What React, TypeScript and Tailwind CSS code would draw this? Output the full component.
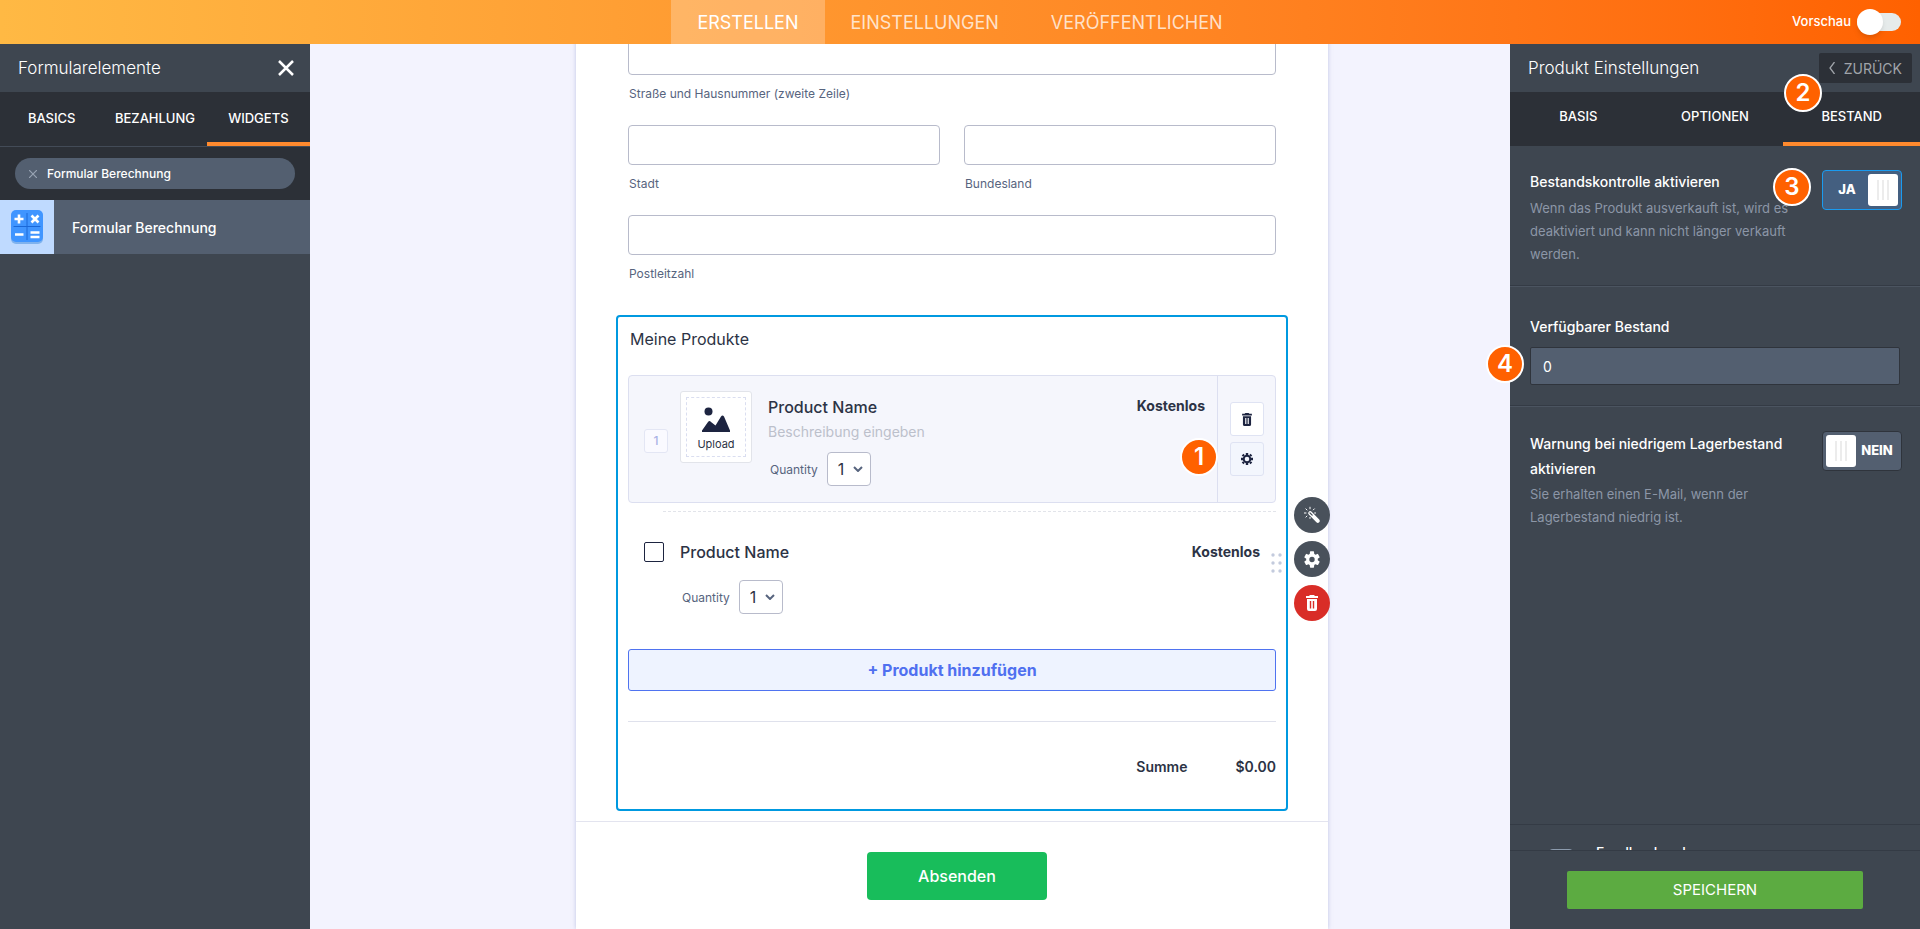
import { useState } from 'react'
import type { ReactNode } from 'react'

type ToggleProps = {
  id: string
  checked: boolean
  onChange: (value: boolean) => void
}

const mainTabs = ['ERSTELLEN', 'EINSTELLUNGEN', 'VERÖFFENTLICHEN']
const elementTabs = ['BASICS', 'BEZAHLUNG', 'WIDGETS']
const productTabs = ['BASIS', 'OPTIONEN', 'BESTAND']

function TrashIcon({ className }: { className?: string }) {
  return (
    <svg viewBox="0 0 12 16" className={className} fill="currentColor" aria-hidden="true">
      <path d="M4 0h4l1 1h3v2H0V1h3z" />
      <path
        fillRule="evenodd"
        d="M1 4h10v10a2 2 0 0 1-2 2H3a2 2 0 0 1-2-2zM3.8 6v7.5h1.4V6zM6.8 6v7.5h1.4V6z"
      />
    </svg>
  )
}

function GearIcon({ className }: { className?: string }) {
  return (
    <svg viewBox="0 0 22 24" className={className} fill="currentColor" aria-hidden="true">
      <path
        fillRule="evenodd"
        d="M19.14 12.94a7 7 0 0 0 0-1.88l2.5-1.9a.6.6 0 0 0 .1-.8l-2.3-4a.6.6 0 0 0-.74-.26l-2.9 1.2a7.4 7.4 0 0 0-1.6-.94L13.8.9a.6.6 0 0 0-.6-.5h-4.4a.6.6 0 0 0-.6.5l-.4 3.46a7.4 7.4 0 0 0-1.6.94l-2.9-1.2a.6.6 0 0 0-.74.26l-2.3 4a.6.6 0 0 0 .1.8l2.5 1.9a7 7 0 0 0 0 1.88l-2.5 1.9a.6.6 0 0 0-.1.8l2.3 4c.15.25.45.35.74.26l2.9-1.2c.5.4 1.03.7 1.6.94l.4 3.46c.05.3.3.5.6.5h4.4c.3 0 .55-.2.6-.5l.4-3.46a7.4 7.4 0 0 0 1.6-.94l2.9 1.2c.27.1.6 0 .74-.26l2.3-4a.6.6 0 0 0-.1-.8zM11 15.8a3.8 3.8 0 1 1 0-7.6 3.8 3.8 0 0 1 0 7.6z"
      />
    </svg>
  )
}

function CogIcon({ className }: { className?: string }) {
  return (
    <svg viewBox="0 0 12 12" className={className} aria-hidden="true">
      <circle cx="6" cy="6" r="3.3" fill="none" stroke="currentColor" strokeWidth="2" />
      <g stroke="currentColor" strokeWidth="2.4">
        <path d="M6 0v2M6 10v2M0 6h2M10 6h2M1.6 1.6L3 3M9 9l1.4 1.4M10.4 1.6L9 3M3 9l-1.4 1.4" />
      </g>
    </svg>
  )
}

function WandIcon() {
  return (
    <svg viewBox="0 0 18 18" className="size-[18px]" fill="none" stroke="white" aria-hidden="true">
      <path d="M7.2 7.2l7.6 7.6" strokeWidth="4" strokeLinecap="round" />
      <path d="M7 7l2.2 2.2" stroke="#49515b" strokeWidth="1.2" strokeLinecap="round" />
      <path
        d="M7 .8v2.4M1 7h2.4M2.6 2.6l1.7 1.7M11.6 2.6L10 4.2M2.6 11.4l1.6-1.6M7 11v1.8M11.2 7h1.8"
        strokeWidth="1"
      />
    </svg>
  )
}

function CalculatorIcon() {
  return (
    <svg viewBox="0 0 34 36" className="h-9 w-[34px]" aria-hidden="true">
      <rect x="1" y="2" width="32" height="33" rx="5" fill="#7fb2ee" />
      <rect x="1" y="1" width="32" height="32" rx="5" fill="#4095ff" />
      <path d="M17 4v27M3.5 17.5h27" stroke="#1a68d8" />
      <path
        d="M4.5 10h9M9 5.500v9M5 25.500h8.500M21.500 6.500l7 7M28.500 6.500l-7 7M20.500 23.500h9M20.500 28h9"
        stroke="white"
        strokeWidth="2.6"
      />
    </svg>
  )
}

function StepBadge({ step, className }: { step: number; className: string }) {
  return (
    <span
      className={`absolute z-20 flex size-[38px] items-center justify-center rounded-full border-2 border-white bg-[#ff6100] text-[24px] leading-none font-semibold text-white ${className}`}
    >
      {step}
    </span>
  )
}

function Toggle({ id, checked, onChange }: ToggleProps) {
  return (
    <label
      htmlFor={id}
      className={`flex h-10 w-20 shrink-0 cursor-pointer items-center rounded border p-[3px] text-[13px] font-extrabold text-white ${
        checked ? 'border-[#1a9bf0] bg-[#445f80]' : 'flex-row-reverse border-[#2f343c] bg-[#535f70]'
      }`}
    >
      <input
        id={id}
        type="checkbox"
        className="sr-only"
        checked={checked}
        onChange={e => onChange(e.target.checked)}
      />
      <span className="flex-1 text-center">{checked ? 'JA' : 'NEIN'}</span>
      <span className="flex h-8 w-[30px] items-center justify-center gap-[3px] rounded-[3px] bg-white">
        <span className="h-5 w-[2px] bg-[#ececec]" />
        <span className="h-5 w-[2px] bg-[#ececec]" />
        <span className="h-5 w-[2px] bg-[#ececec]" />
      </span>
    </label>
  )
}

function PanelTabs({ items, active, className }: { items: string[]; active: string; className: string }) {
  return (
    <nav className="grid h-[54px] shrink-0 grid-cols-3 bg-[#2c3037]">
      {items.map(item => (
        <button
          key={item}
          type="button"
          className={`border-b-4 text-[13px] font-medium text-white ${className} ${
            item === active ? 'border-[#ff8a2e]' : 'border-transparent'
          }`}
        >
          {item}
        </button>
      ))}
    </nav>
  )
}

function Field({ id, label }: { id: string; label: string }) {
  return (
    <div className="h-[90px]">
      <input id={id} type="text" className="block h-10 w-full rounded border border-[#b8bbcb] px-3" />
      <label htmlFor={id} className="mt-2.5 block pl-px text-[12px] leading-[18px] text-[#57647e]">
        {label}
      </label>
    </div>
  )
}

function Quantity({ id }: { id: string }) {
  return (
    <div className="flex items-center pl-0.5">
      <label htmlFor={id} className="pt-0.5 text-[12px] text-[#57647e]">
        Quantity
      </label>
      <div className="relative ml-[9px]">
        <select
          id={id}
          className="block h-[34px] w-11 appearance-none rounded border border-[#b8bbcb] bg-white pl-2.5 text-[16px] text-[#2c3345]"
        >
          <option>1</option>
          <option>2</option>
          <option>3</option>
        </select>
        <svg
          viewBox="0 0 10 6"
          className="pointer-events-none absolute top-3.5 right-2 h-1.5 w-2.5"
          fill="none"
          stroke="#57647e"
          strokeWidth="2"
          aria-hidden="true"
        >
          <path d="M1 1l4 4 4-4" />
        </svg>
      </div>
    </div>
  )
}

function RoundButton({ label, className, children }: { label: string; className: string; children: ReactNode }) {
  return (
    <button
      type="button"
      aria-label={label}
      className={`flex size-9 items-center justify-center rounded-full text-white ${className}`}
    >
      {children}
    </button>
  )
}

function Header() {
  const [preview, setPreview] = useState(false)

  return (
    <header className="grid h-11 shrink-0 grid-cols-[1fr_auto_1fr] bg-linear-to-r from-[#ffb944] to-[#ff6100]">
      <nav className="col-start-2 flex text-[18px]">
        {mainTabs.map(tab => (
          <button
            key={tab}
            type="button"
            className={`px-[26px] ${tab === 'ERSTELLEN' ? 'bg-white/25 text-white' : 'text-white/75'}`}
          >
            {tab}
          </button>
        ))}
      </nav>
      <label
        htmlFor="preview"
        className="flex items-center gap-1.5 justify-self-end pr-[19px] text-[13px] font-medium text-white"
      >
        Vorschau
        <input
          id="preview"
          type="checkbox"
          className="sr-only"
          checked={preview}
          onChange={e => setPreview(e.target.checked)}
        />
        <span className="flex h-[18px] w-11 items-center rounded-full bg-[#e6ebeb]">
          <span className="size-[26px] shrink-0 rounded-full bg-white shadow-md" />
        </span>
      </label>
    </header>
  )
}

function ElementsPanel() {
  const [search, setSearch] = useState('Formular Berechnung')

  return (
    <aside className="flex w-[310px] shrink-0 flex-col bg-[#3e4650] text-white">
      <div className="flex h-12 items-center justify-between pr-4 pl-[18px]">
        <h2 className="pt-0.5 text-[17px] font-light">Formularelemente</h2>
        <button type="button" aria-label="Schließen">
          <svg viewBox="0 0 16 16" className="size-4" stroke="white" strokeWidth="2.5" aria-hidden="true">
            <path d="M1 1l14 14M15 1L1 15" />
          </svg>
        </button>
      </div>
      <PanelTabs items={elementTabs} active="WIDGETS" className="pt-1" />
      <div className="border-t border-[#434b57] bg-[#2c3037] px-[15px] py-[11px]">
        <div className="flex h-[31px] items-center gap-2.5 rounded-full bg-[#535f70] px-3.5">
          <button type="button" aria-label="Suche löschen">
            <svg viewBox="0 0 8 8" className="size-2" stroke="#98a3b3" strokeWidth="1.2" aria-hidden="true">
              <path d="M0 0l8 8M8 0L0 8" />
            </svg>
          </button>
          <input
            type="text"
            aria-label="Suche"
            value={search}
            onChange={e => setSearch(e.target.value)}
            className="min-w-0 flex-1 text-[12px] font-medium outline-none"
          />
        </div>
      </div>
      <button type="button" className="flex h-[54px] items-center bg-[#535f70] text-left text-[14px] font-medium">
        <span className="flex size-[54px] items-center justify-center bg-[#bfdaff]">
          <CalculatorIcon />
        </span>
        <span className="pl-[18px]">Formular Berechnung</span>
      </button>
    </aside>
  )
}

function SelectedProduct() {
  return (
    <div className="relative flex h-32 rounded border border-[#dcdff0] bg-[#f5f6fc]">
      <div className="flex flex-1 items-start py-[15px] pr-3 pl-[15px]">
        <span className="mt-[38px] flex size-6 items-center justify-center rounded-[3px] border border-[#e3e6f4] bg-[#fafaff] text-[12px] font-medium text-[#a9b2e6]">
          1
        </span>
        <button type="button" className="ml-3 size-[72px] rounded-[3px] border border-[#e2e4ea] bg-white p-[5px]">
          <span className="flex size-full flex-col items-center justify-end border border-dashed border-[#dadef0] pb-[5px]">
            <svg viewBox="0 0 28 26" className="h-[26px] w-7" fill="#1d2440" aria-hidden="true">
              <circle cx="6.5" cy="4.5" r="4" />
              <path d="M0 25v-1.500L6 15q1.500-2 3 0l4.500 3.500L19 9.500q1.500-2 3 0L28 23.500V25z" />
            </svg>
            <span className="mt-1 text-[11px] leading-[14px] text-[#2c3345]">Upload</span>
          </span>
        </button>
        <div className="ml-4 flex-1">
          <h3 className="text-[16px] leading-8 font-medium text-[#2c3345]">Product Name</h3>
          <p className="text-[14px] leading-[18px] text-[#bcc0cb]">Beschreibung eingeben</p>
          <div className="pt-[11px]">
            <Quantity id="quantity-1" />
          </div>
        </div>
        <span className="text-[14px] leading-[30px] font-bold text-[#2c3345]">Kostenlos</span>
      </div>
      <div className="flex w-[58px] flex-col items-center justify-center gap-1.5 border-l border-[#dcdff0]">
        <button
          type="button"
          aria-label="Produkt löschen"
          className="flex size-[34px] items-center justify-center rounded-[3px] border border-[#dfe3f3] bg-white text-[#1d2440]"
        >
          <TrashIcon className="h-[13px] w-2.5" />
        </button>
        <button
          type="button"
          aria-label="Produkt Einstellungen"
          className="flex size-[34px] items-center justify-center rounded-[3px] border border-[#dfe3f3] bg-[#f3f6fd] text-[#1d2440]"
        >
          <CogIcon className="size-3" />
        </button>
      </div>
      <StepBadge step={1} className="top-[62px] right-[57px]" />
    </div>
  )
}

function ProductList() {
  return (
    <section className="relative mx-10 rounded border-2 border-[#0099e0] px-2.5 pb-4">
      <h2 className="pt-[9px] pb-[23px] pl-0.5 text-[16px] leading-[26px] text-[#2c3345]">Meine Produkte</h2>
      <SelectedProduct />
      <div className="mt-2 ml-[35px] border-t border-dashed border-[#e2e4ea]" />
      <div className="flex items-start pt-[30px] pr-4 pl-4">
        <input
          id="product-2"
          type="checkbox"
          className="size-5 appearance-none rounded-[2px] border border-[#1d2440] bg-white"
        />
        <div className="ml-4 flex-1">
          <label htmlFor="product-2" className="block text-[16px] leading-5 font-medium text-[#2c3345]">
            Product Name
          </label>
          <div className="pt-[18px]">
            <Quantity id="quantity-2" />
          </div>
        </div>
        <span className="text-[14px] leading-5 font-bold text-[#2c3345]">Kostenlos</span>
      </div>
      <button
        type="button"
        className="mt-[35px] block h-[42px] w-full rounded-[3px] border border-[#4f73f0] bg-[#eef3ff] text-[16px] font-bold text-[#5070f0]"
      >
        + Produkt hinzufügen
      </button>
      <dl className="mt-[30px] flex justify-end gap-12 border-t border-[#dfe1ec] pt-[33px] pb-[14px] text-[14px] leading-6 font-semibold text-[#2c3345]">
        <dt>Summe</dt>
        <dd>$0.00</dd>
      </dl>
      {/* drag handle */}
      <svg viewBox="0 0 12 22" className="absolute top-[235px] right-[3px] h-[22px] w-3" fill="#c3cbdd" aria-hidden="true">
        <circle cx="2" cy="3" r="1.7" />
        <circle cx="9" cy="3" r="1.7" />
        <circle cx="2" cy="11" r="1.7" />
        <circle cx="9" cy="11" r="1.7" />
        <circle cx="2" cy="19" r="1.7" />
        <circle cx="9" cy="19" r="1.7" />
      </svg>
      <div className="absolute top-[180px] -right-11 flex flex-col gap-2">
        <RoundButton label="Assistent" className="bg-[#49515b]">
          <WandIcon />
        </RoundButton>
        <RoundButton label="Einstellungen" className="bg-[#49515b]">
          <GearIcon className="h-[17px] w-4" />
        </RoundButton>
        <RoundButton label="Löschen" className="bg-[#d92d27]">
          <TrashIcon className="h-4 w-3" />
        </RoundButton>
      </div>
    </section>
  )
}

function FormCanvas() {
  return (
    <main className="flex min-w-0 flex-1 justify-center overflow-hidden bg-[#f3f3fe] pl-21">
      {/* the form is scrolled a little past its first field */}
      <form className="-mt-[9px] w-full max-w-[752px] bg-white shadow-[0_0_4px_rgba(140,150,200,0.5)]">
        <div className="px-13">
          <Field id="street2" label="Straße und Hausnummer (zweite Zeile)" />
          <div className="grid grid-cols-2 gap-6">
            <Field id="city" label="Stadt" />
            <Field id="state" label="Bundesland" />
          </div>
          <Field id="zip" label="Postleitzahl" />
        </div>
        <div className="pt-2.5">
          <ProductList />
        </div>
        <div className="mt-2.5 flex justify-center border-t border-[#e3e4ef] pt-[30px] pb-8 pl-2.5">
          <button type="submit" className="h-12 w-[180px] rounded bg-[#18bd5b] text-[16px] font-medium text-white">
            Absenden
          </button>
        </div>
      </form>
    </main>
  )
}

function ProductPanel() {
  const [stockControl, setStockControl] = useState(true)
  const [lowStock, setLowStock] = useState(false)
  const [stock, setStock] = useState('0')

  return (
    <aside className="relative flex w-[410px] shrink-0 flex-col bg-[#3e4650] text-white">
      <div className="flex h-12 shrink-0 items-center justify-between pr-2 pl-[18px]">
        <h2 className="pt-0.5 text-[17px] font-light">Produkt Einstellungen</h2>
        <button
          type="button"
          className="flex h-[30px] items-center gap-[9px] rounded-[2px] bg-[#2c3037] px-2.5 text-[14px] text-[#a0a4aa]"
        >
          <svg viewBox="0 0 6 12" className="h-3 w-1.5" fill="none" stroke="currentColor" aria-hidden="true">
            <path d="M5.500 0L1 6l4.500 6" strokeWidth="1.3" />
          </svg>
          ZURÜCK
        </button>
      </div>
      <PanelTabs items={productTabs} active="BESTAND" className="" />
      <div className="flex min-h-0 flex-1 flex-col overflow-hidden">
        <div className="flex items-start justify-between border-b border-[#343b45] pt-6 pr-[18px] pb-[19px] pl-5">
          <div className="w-[272px]">
            <label htmlFor="stock-control" className="block text-[14px] leading-[24px] font-medium">
              Bestandskontrolle aktivieren
            </label>
            <p className="mt-[3px] text-[13px] leading-[23px] text-[#8c96a7]">
              Wenn das Produkt ausverkauft ist, wird es deaktiviert und kann nicht länger verkauft werden.
            </p>
          </div>
          <Toggle id="stock-control" checked={stockControl} onChange={setStockControl} />
        </div>
        <div className="border-t border-b border-t-[#4b5460] border-b-[#343b45] pt-7 pr-5 pb-5 pl-5">
          <label htmlFor="stock" className="block text-[14px] leading-[24px] font-medium">
            Verfügbarer Bestand
          </label>
          <input
            id="stock"
            type="text"
            value={stock}
            onChange={e => setStock(e.target.value)}
            className="mt-2 block h-[38px] w-full rounded-[2px] border border-[#2f343c] bg-[#535f70] px-3 text-[14px]"
          />
        </div>
        <div className="flex items-start justify-between border-t border-[#4b5460] pt-6 pr-[18px] pl-5">
          <div className="w-[272px]">
            <label htmlFor="low-stock" className="block text-[14px] leading-[25px] font-medium">
              Warnung bei niedrigem Lagerbestand aktivieren
            </label>
            <p className="mt-0.5 text-[13px] leading-[23px] text-[#8c96a7]">
              Sie erhalten einen E-Mail, wenn der Lagerbestand niedrig ist.
            </p>
          </div>
          <Toggle id="low-stock" checked={lowStock} onChange={setLowStock} />
        </div>
        <div className="mt-auto h-[26px] shrink-0 overflow-hidden border-t border-[#343b45] pt-[18px] pl-[39px]">
          <p className="flex items-start gap-[23px] text-[14px] leading-5 font-medium">
            <span className="mt-1.5 h-4 w-6 shrink-0 rounded-t bg-[#8c9bad]" />
            Feedback geben
          </p>
        </div>
      </div>
      <div className="border-t border-[#343b45] px-[57px] py-5">
        <button type="button" className="h-[38px] w-full rounded-[2px] bg-[#5cab41] text-[15px]">
          SPEICHERN
        </button>
      </div>
      <StepBadge step={2} className="top-[30px] right-[98px]" />
      <StepBadge step={3} className="top-[124px] right-[109px]" />
      <StepBadge step={4} className="top-[301px] -left-6" />
    </aside>
  )
}

export default function App() {
  return (
    <div className="flex h-screen flex-col overflow-hidden font-[Inter,sans-serif]">
      <Header />
      <div className="flex min-h-0 flex-1">
        <ElementsPanel />
        <FormCanvas />
        <ProductPanel />
      </div>
    </div>
  )
}
